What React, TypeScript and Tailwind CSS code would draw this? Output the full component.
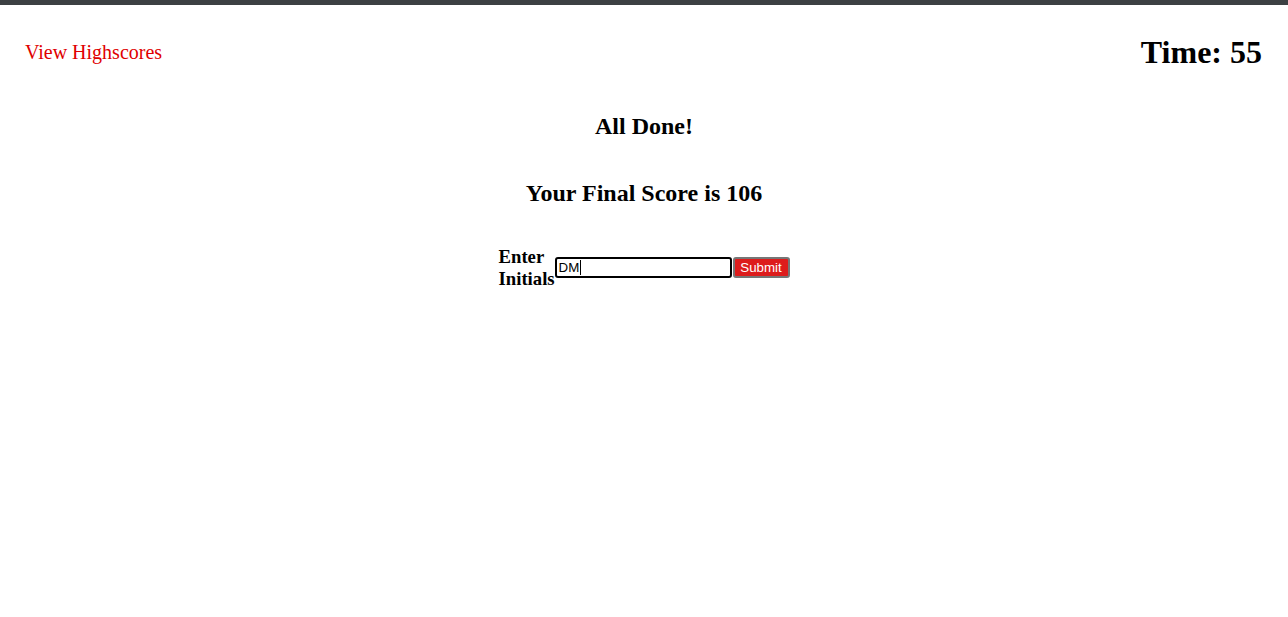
export default function App() {
  return (
    <div className="min-h-[617px] bg-white text-black" style={{ fontFamily: '"Liberation Serif", "Times New Roman", serif' }}>
      <div className="h-[5px] bg-[#3c4043]" />
      <header className="flex h-[94px] items-center justify-between pl-[25px] pr-[26px]">
        <a className="text-[20px] leading-[23px] text-[#e00000]">View Highscores</a>
        <h1 className="text-[32px] font-bold leading-[37px]">Time: 55</h1>
      </header>
      <main className="flex flex-col items-center">
        <h2 className="mt-[13px] text-[24px] font-bold leading-[28px]">All Done!</h2>
        <h2 className="mt-[39px] text-[24px] font-bold leading-[28px]">Your Final Score is 106</h2>
        <div className="mt-[39px] flex items-center">
          <label className="w-[56px] text-[18.72px] font-bold leading-[21.5px]">Enter Initials</label>
          <div
            className="flex h-[21px] w-[177px] items-center rounded-[3px] border-2 border-black pl-[2px] text-[13.33px] text-black"
            style={{ fontFamily: '"Liberation Sans", Arial, sans-serif' }}
          >
            DM<span className="ml-[1px] inline-block h-[15px] w-px bg-black" />
          </div>
          <button
            className="ml-px flex h-[21px] w-[57px] items-center justify-center rounded-[3px] border-2 border-[#767676] bg-[#dd1c1c] text-[13.33px] text-white"
            style={{ fontFamily: '"Liberation Sans", Arial, sans-serif' }}
          >
            Submit
          </button>
        </div>
      </main>
    </div>
  );
}
